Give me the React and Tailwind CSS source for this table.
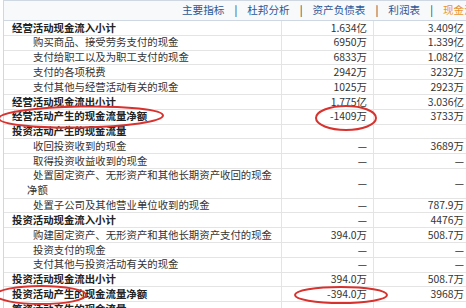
import React from "react";

const rows = [
  { l: "经营活动现金流入小计", a: "1.634亿", b: "3.409亿", bold: true },
  { l: "购买商品、接受劳务支付的现金", a: "6950万", b: "1.339亿" },
  { l: "支付给职工以及为职工支付的现金", a: "6833万", b: "1.082亿" },
  { l: "支付的各项税费", a: "2942万", b: "3232万" },
  { l: "支付其他与经营活动有关的现金", a: "1025万", b: "2923万" },
  { l: "经营活动现金流出小计", a: "1.775亿", b: "3.036亿", bold: true },
  { l: "经营活动产生的现金流量净额", a: "-1409万", b: "3733万", bold: true },
  { l: "投资活动产生的现金流量", a: "", b: "", bold: true },
  { l: "收回投资收到的现金", a: "—", b: "3689万" },
  { l: "取得投资收益收到的现金", a: "—", b: "—" },
  { l: "处置固定资产、无形资产和其他长期资产收回的现金净额", a: "—", b: "—", tall: true },
  { l: "处置子公司及其他营业单位收到的现金", a: "—", b: "787.9万" },
  { l: "投资活动现金流入小计", a: "—", b: "4476万", bold: true },
  { l: "购建固定资产、无形资产和其他长期资产支付的现金", a: "394.0万", b: "508.7万" },
  { l: "投资支付的现金", a: "—", b: "—" },
  { l: "支付其他与投资活动有关的现金", a: "—", b: "—" },
  { l: "投资活动现金流出小计", a: "394.0万", b: "508.7万", bold: true },
  { l: "投资活动产生的现金流量净额", a: "-394.0万", b: "3968万", bold: true },
  { l: "筹资活动产生的现金流量", a: "", b: "", bold: true },
];

const font = { fontFamily: '"Noto Sans CJK SC", "Liberation Sans", sans-serif' };

export default function App() {
  return (
    <div
      className="relative w-[466px] h-[308px] overflow-hidden bg-white text-[10.4px] leading-none text-[#333]"
      style={font}
    >
      <div className="ml-[3px] border-l border-[#cfd8e2]">
        <div className="h-[21px] border-t border-b border-[#cfd8e2] bg-[#f7f9fb] flex items-center justify-end pr-0 whitespace-nowrap text-[10.6px] text-[#2b5797]">
          <span>主要指标</span>
          <span className="mx-[10px] text-[#333]">|</span>
          <span>杜邦分析</span>
          <span className="mx-[10px] text-[#333]">|</span>
          <span>资产负债表</span>
          <span className="mx-[10px] text-[#333]">|</span>
          <span>利润表</span>
          <span className="mx-[10px] text-[#333]">|</span>
          <span className="text-[#e8922e] w-[23px] overflow-hidden">现金流</span>
        </div>
        {rows.map((r, i) => (
          <div
            key={i}
            className={`flex border-b border-[#e4e4e4] ${r.tall ? "h-[29.6px]" : "h-[14.8px]"}`}
          >
            <div
              className={`w-[278px] shrink-0 border-r border-[#e4e4e4] flex items-center ${
                r.bold ? "pl-[8px] font-bold text-[#222]" : "pl-[23px] indent-[6px]"
              }`}
            >
              <span className={r.tall ? "leading-[14.8px] w-[250px]" : "whitespace-nowrap"}>{r.l}</span>
            </div>
            <div className="w-[92px] shrink-0 border-r border-[#e4e4e4] flex items-center justify-end pr-[6px] whitespace-nowrap">
              {r.a}
            </div>
            <div className="flex-1 flex items-center justify-end pr-[2px] whitespace-nowrap">
              {r.b}
            </div>
          </div>
        ))}
      </div>
      <svg className="absolute inset-0 pointer-events-none" width="466" height="308">
        <g fill="none" stroke="#d8322e" strokeWidth="2">
          <ellipse cx="81" cy="117" rx="82" ry="10.5" transform="rotate(-1 81 117)" />
          <ellipse cx="346" cy="118" rx="30" ry="12" />
          <ellipse cx="41" cy="295" rx="45" ry="9" />
          <ellipse cx="341" cy="295" rx="46" ry="8" />
        </g>
      </svg>
    </div>
  );
}
